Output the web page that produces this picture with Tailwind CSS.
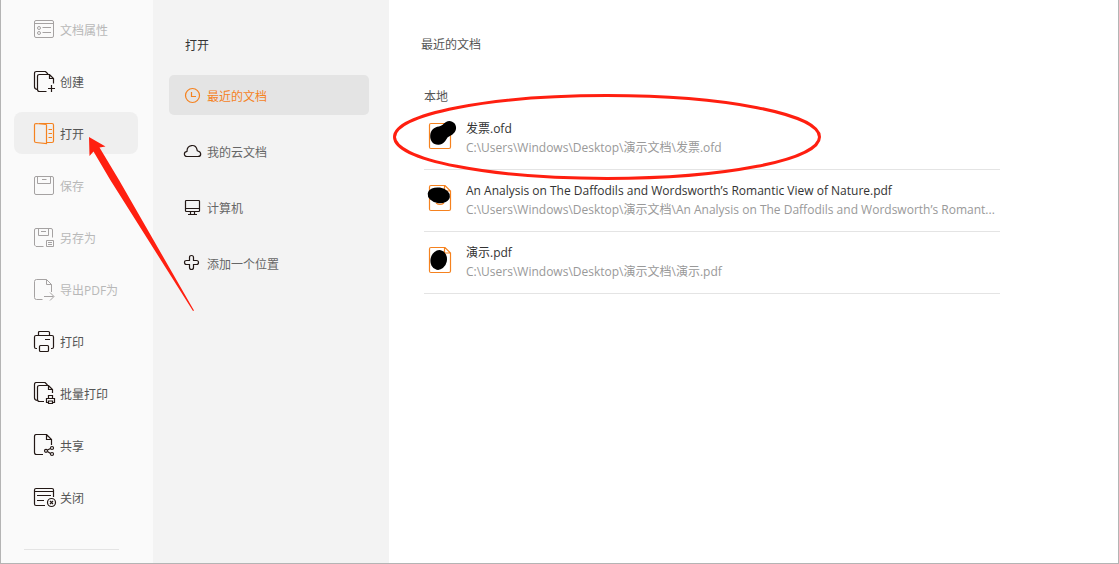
<!doctype html>
<html lang="zh-CN">
<head>
  <meta charset="UTF-8" />
  <meta name="viewport" content="width=device-width, initial-scale=1.0" />
  <title>打开</title>
  <script src="https://cdn.jsdelivr.net/npm/@tailwindcss/browser@4"></script>
</head>
<body class="relative flex min-h-screen overflow-hidden border-x border-b border-[#b4b4b4] bg-white font-['Open_Sans','Noto_Sans_CJK_SC',sans-serif] text-xs text-[#555]">

  <!-- Menú de archivo -->
  <nav class="w-[152px] shrink-0 bg-[#fafafa] pt-2" aria-label="文件">
    <div class="mx-[13px] flex flex-col gap-[10px]">
      <button class="flex h-[42px] w-[124px] items-center gap-[3px] rounded-lg pt-[2px] pl-[19px] text-[#b8b8b8]" disabled>
        <svg class="size-6 shrink-0 text-[#a5a2a2]" viewBox="0 0 24 24" fill="none" stroke="currentColor">
          <rect x="1.5" y="2.5" width="19" height="17" rx="1.5" />
          <path d="M1.5 5.5h19M9.5 9.5H18M9.5 14.5H18" />
          <circle cx="6" cy="10" r="1.5" /><circle cx="6" cy="15" r="1.5" />
        </svg>
        <span class="pt-[2px]">文档属性</span>
      </button>
      <button class="flex h-[42px] w-[124px] items-center gap-[3px] rounded-lg pt-[2px] pl-[19px]">
        <svg class="size-6 shrink-0 text-[#231815]" viewBox="0 0 24 24" fill="none" stroke="currentColor" stroke-width="1.2">
          <path d="M4.5 19.5Q1.5 19 1.5 17V3.5Q1.5 1.5 3.5 1.5H12.5L15 4" />
          <path d="M13.5 21.5H6.5Q4.5 21.5 4.5 19.5V6.5Q4.5 4.5 6.5 4.5H16.5L20.5 8.5V13.5M16.5 4.5V8.5H20.5M18.5 15V22M15 18.5H22" />
        </svg>
        <span class="pt-[2px]">创建</span>
      </button>
      <button class="flex h-[42px] w-[124px] items-center gap-[3px] rounded-lg bg-[#efefef] pt-[2px] pl-[19px]" aria-current="page">
        <svg class="size-6 shrink-0 text-[#f5821f]" viewBox="0 0 24 24" fill="none" stroke="currentColor" stroke-width="1.2">
          <path d="M13.5 2.5V21.5L3 20.5Q1.5 20.5 1.5 19V3Q1.5 1.5 3 1.5L13.5 2.5M6 1.5H19Q20.5 1.5 20.5 3V19Q20.5 20.5 19 20.5H13.5M15.5 7.5H19M15.5 11.5H19M15.5 15.5H19" />
        </svg>
        <span class="pt-[2px]">打开</span>
      </button>
      <button class="flex h-[42px] w-[124px] items-center gap-[3px] rounded-lg pt-[2px] pl-[19px] text-[#b8b8b8]" disabled>
        <svg class="size-6 shrink-0 text-[#a5a2a2]" viewBox="0 0 24 24" fill="none" stroke="currentColor">
          <rect x="1.5" y="2.5" width="19" height="18" rx="1.5" />
          <path d="M4.5 2.5V9.5H17.5V2.5M9 5.5H13.5" />
        </svg>
        <span class="pt-[2px]">保存</span>
      </button>
      <button class="flex h-[42px] w-[124px] items-center gap-[3px] rounded-lg pt-[2px] pl-[19px] text-[#b8b8b8]" disabled>
        <svg class="size-6 shrink-0 text-[#a5a2a2]" viewBox="0 0 24 24" fill="none" stroke="currentColor">
          <path d="M10.5 20.5H3L1.5 19V4Q1.5 2.5 3 2.5H18Q19.5 2.5 19.5 4V11.5M5.5 2.5V9.5H15.5V2.5M8 5.5H13" />
          <path d="M13.5 14.5H20.5V20.5H13.5ZM15 16.5H19M15 18.5H19" />
        </svg>
        <span class="pt-[2px]">另存为</span>
      </button>
      <button class="flex h-[42px] w-[124px] items-center gap-[3px] rounded-lg pt-[2px] pl-[19px] text-[#b8b8b8]" disabled>
        <svg class="size-6 shrink-0 text-[#a5a2a2]" viewBox="0 0 24 24" fill="none" stroke="currentColor">
          <path d="M9.5 21.5H3.5Q1.5 21.5 1.5 19.5V3.5Q1.5 1.5 3.5 1.5H13.5L18.5 6.5V14M13.5 1.5V6.5H18.5M11 18.5H20.5M17 14.5L21 18.5L17 22.5" />
        </svg>
        <span class="pt-[2px]">导出PDF为</span>
      </button>
      <button class="flex h-[42px] w-[124px] items-center gap-[3px] rounded-lg pt-[2px] pl-[19px]">
        <svg class="size-6 shrink-0 text-[#231815]" viewBox="0 0 24 24" fill="none" stroke="currentColor" stroke-width="1.2">
          <path d="M5.5 5.5V2.5Q5.5 1.5 6.5 1.5H15.5Q16.5 1.5 16.5 2.5V5.5M4 18.5H3Q1.5 18.5 1.5 17V7Q1.5 5.5 3 5.5H19Q20.5 5.5 20.5 7V17Q20.5 18.5 19 18.5H18M12 9.5H17" />
          <rect x="6.5" y="15.5" width="9" height="6" rx="1" />
        </svg>
        <span class="pt-[2px]">打印</span>
      </button>
      <button class="flex h-[42px] w-[124px] items-center gap-[3px] rounded-lg pt-[2px] pl-[19px]">
        <svg class="size-6 shrink-0 text-[#231815]" viewBox="0 0 24 24" fill="none" stroke="currentColor" stroke-width="1.2">
          <path d="M4.5 18.5Q1.5 18 1.5 16V2.5Q1.5 .5 3.5 .5H12L14.5 3" />
          <path d="M11 19.5H6.5Q4.5 19.5 4.5 17.5V5.5Q4.5 3.5 6.5 3.5H15.5L19.5 7.5V11M15.5 3.5V7.5H19.5" />
          <path d="M15.5 16V13.5H19.5V16M15 20.5H13.5V16.5H21.5V20.5H20M15.5 19H19.5V21.5H15.5Z" />
        </svg>
        <span class="pt-[2px]">批量打印</span>
      </button>
      <button class="flex h-[42px] w-[124px] items-center gap-[3px] rounded-lg pt-[2px] pl-[19px]">
        <svg class="size-6 shrink-0 text-[#231815]" viewBox="0 0 24 24" fill="none" stroke="currentColor" stroke-width="1.2">
          <path d="M10 20.5H3.5Q1.5 20.5 1.5 18.5V2.5Q1.5 .5 3.5 .5H13.5L18.5 5.5V11M13.5 .5V5.5H18.5M14.5 16L17.5 14.5M14.5 17.5L17.5 19.5" />
          <circle cx="13" cy="16.8" r="1.5" /><circle cx="19" cy="14" r="1.5" /><circle cx="19" cy="20" r="1.5" />
        </svg>
        <span class="pt-[2px]">共享</span>
      </button>
      <button class="flex h-[42px] w-[124px] items-center gap-[3px] rounded-lg pt-[2px] pl-[19px]">
        <svg class="size-6 shrink-0 text-[#231815]" viewBox="0 0 24 24" fill="none" stroke="currentColor" stroke-width="1.2">
          <path d="M12 19.5H3Q1.5 19.5 1.5 18V4Q1.5 2.5 3 2.5H19Q20.5 2.5 20.5 4V11M1.5 5.5H20.5M4 9.5H18M4 14.5H11" />
          <circle cx="18.5" cy="16.5" r="4" /><path d="M17 15L20 18M20 15L17 18" />
        </svg>
        <span class="pt-[2px]">关闭</span>
      </button>
    </div>
    <hr class="mt-[31px] mr-[34px] ml-[23px] border-[#e4e4e4]" />
  </nav>

  <!-- Origen de los documentos -->
  <section class="w-[236px] shrink-0 bg-[#f3f3f3] px-4 pt-9">
    <h1 class="mb-[19px] pl-4 text-xs/5 text-[#333]">打开</h1>
    <div class="flex flex-col gap-4">
      <button class="flex h-10 w-[200px] items-center gap-1 rounded-[5px] bg-[#e4e4e4] pl-[14px] text-[#f5821f]" aria-current="page">
        <svg class="size-5 shrink-0" viewBox="0 0 20 20" fill="none" stroke="currentColor" stroke-width="1.2">
          <circle cx="9.5" cy="10.5" r="7" /><path d="M8.500 7V11.500H13" />
        </svg>
        <span class="pt-[3px]">最近的文档</span>
      </button>
      <button class="flex h-10 w-[200px] items-center gap-1 rounded-[5px] pl-[14px] text-[#666]">
        <svg class="size-5 shrink-0 text-[#231815]" viewBox="0 0 20 20" fill="none" stroke="currentColor" stroke-width="1.2">
          <path d="M4 15.5C.5 15.5 .5 10.8 4 10.3C4 3.5 12.5 2.5 14 8.5C14.2 9.5 14 9.800 14.800 10C18.800 11 18.500 15.500 15 15.500Z" />
        </svg>
        <span class="pt-[3px]">我的云文档</span>
      </button>
      <button class="flex h-10 w-[200px] items-center gap-1 rounded-[5px] pl-[14px] text-[#666]">
        <svg class="size-5 shrink-0 text-[#231815]" viewBox="0 0 20 20" fill="none" stroke="currentColor" stroke-width="1.2">
          <rect x="2.5" y="3.5" width="14" height="11" rx=".8" />
          <path d="M2.5 11.5H16.5M7.5 14.5V17.5M11.5 14.5V17.5M5 17.5H14" />
        </svg>
        <span class="pt-[3px]">计算机</span>
      </button>
      <button class="flex h-10 w-[200px] items-center gap-1 rounded-[5px] pl-[14px] text-[#666]">
        <svg class="size-5 shrink-0 text-[#231815]" viewBox="0 0 20 20" fill="none" stroke="currentColor" stroke-width="1.2">
          <path d="M6.5 7.5V4.5Q6.5 2.5 8.5 2.5T10.5 4.5V7.5H13.5Q15.5 7.5 15.5 9.5T13.5 11.5H10.5V14.5Q10.5 16.5 8.5 16.5T6.5 14.5V11.5H3.5Q1.5 11.5 1.5 9.5T3.5 7.5Z" />
        </svg>
        <span class="pt-[3px]">添加一个位置</span>
      </button>
    </div>
  </section>

  <!-- Documentos recientes -->
  <main class="min-w-0 flex-1 pt-[35px] pr-[118px] pl-8">
    <h2 class="mb-8 text-xs/5">最近的文档</h2>
    <h3 class="mb-px pl-[3px] text-xs/5">本地</h3>
    <ul class="ml-[3px]">
      <li class="border-b border-[#e4e4e4]">
        <a href="#" class="flex h-[61px] gap-[15px] pl-[5px]">
          <svg class="mt-[15px] h-[26px] w-[22px] shrink-0 overflow-visible" viewBox="0 0 22 26" fill="none" stroke="#f5821f" stroke-width="1.2">
            <path d="M2 .5H16L21.5 6V24Q21.5 25.5 20 25.5H2Q.5 25.5 .5 24V2Q.5 .5 2 .5Z" />
            <path d="M17 -1C22 -4 28 .5 27 6C26 11 21.500 12.500 18.500 14.500C16.500 18 14.500 21.500 9.500 21.800C4 22 .8 17.500 1.200 12.500C1.500 7.500 5 4 10 3.500C13 3 14.500 .5 17 -1Z" fill="#000" stroke="none" />
          </svg>
          <span class="min-w-0 flex-1 pt-[11px] leading-[19px] whitespace-nowrap">
            <span class="block text-[#333]">发票.ofd</span>
            <span class="block text-[#999]">C:\Users\Windows\Desktop\演示文档\发票.ofd</span>
          </span>
        </a>
      </li>
      <li class="border-b border-[#e4e4e4]">
        <a href="#" class="flex h-[61px] gap-[15px] pl-[5px]">
          <svg class="mt-[15px] h-[26px] w-[22px] shrink-0 overflow-visible" viewBox="0 0 22 26" fill="none" stroke="#f5821f" stroke-width="1.2">
            <path d="M2 .5H16L21.5 6V24Q21.5 25.5 20 25.5H2Q.5 25.5 .5 24V2Q.5 .5 2 .5ZM15.5 .5V6H21.5M7 18Q11 21 15 18" />
            <ellipse cx="9.8" cy="10.3" rx="11.2" ry="7.8" transform="rotate(9 9.8 10.3)" fill="#000" stroke="none" />
          </svg>
          <span class="min-w-0 flex-1 pt-[11px] leading-[19px] whitespace-nowrap">
            <span class="block text-[#333]">An Analysis on The Daffodils and Wordsworth’s Romantic View of Nature.pdf</span>
            <span class="block text-[#999]">C:\Users\Windows\Desktop\演示文档\An Analysis on The Daffodils and Wordsworth’s Romant...</span>
          </span>
        </a>
      </li>
      <li class="border-b border-[#e4e4e4]">
        <a href="#" class="flex h-[61px] gap-[15px] pl-[5px]">
          <svg class="mt-[15px] h-[26px] w-[22px] shrink-0 overflow-visible" viewBox="0 0 22 26" fill="none" stroke="#f5821f" stroke-width="1.2">
            <path d="M2 .5H16L21.5 6V24Q21.5 25.5 20 25.5H2Q.5 25.5 .5 24V2Q.5 .5 2 .5ZM15.5 .5V6H21.5" />
            <ellipse cx="9.7" cy="13" rx="8.2" ry="10" transform="rotate(12 9.7 13)" fill="#000" stroke="none" />
          </svg>
          <span class="min-w-0 flex-1 pt-[11px] leading-[19px] whitespace-nowrap">
            <span class="block text-[#333]">演示.pdf</span>
            <span class="block text-[#999]">C:\Users\Windows\Desktop\演示文档\演示.pdf</span>
          </span>
        </a>
      </li>
    </ul>
  </main>

  <!-- Marcas rojas sobre la ventana -->
  <svg class="pointer-events-none absolute top-[130px] left-[79px] h-[190px] w-[120px]" viewBox="80 130 120 190" fill="#ff1f10" aria-hidden="true">
    <path d="M89 137L105.500 146.500L99.500 147.500L119 180L194 310.500L193 311L110.300 180L93.500 151.500L89.500 156Z" />
  </svg>
  <svg class="pointer-events-none absolute top-[94px] left-[392px] h-[86px] w-[428px]" viewBox="0 0 428 86" fill="none" stroke="#ff1f10" stroke-width="3" aria-hidden="true">
    <ellipse cx="214" cy="43" rx="212.5" ry="41.5" />
  </svg>
</body>
</html>
